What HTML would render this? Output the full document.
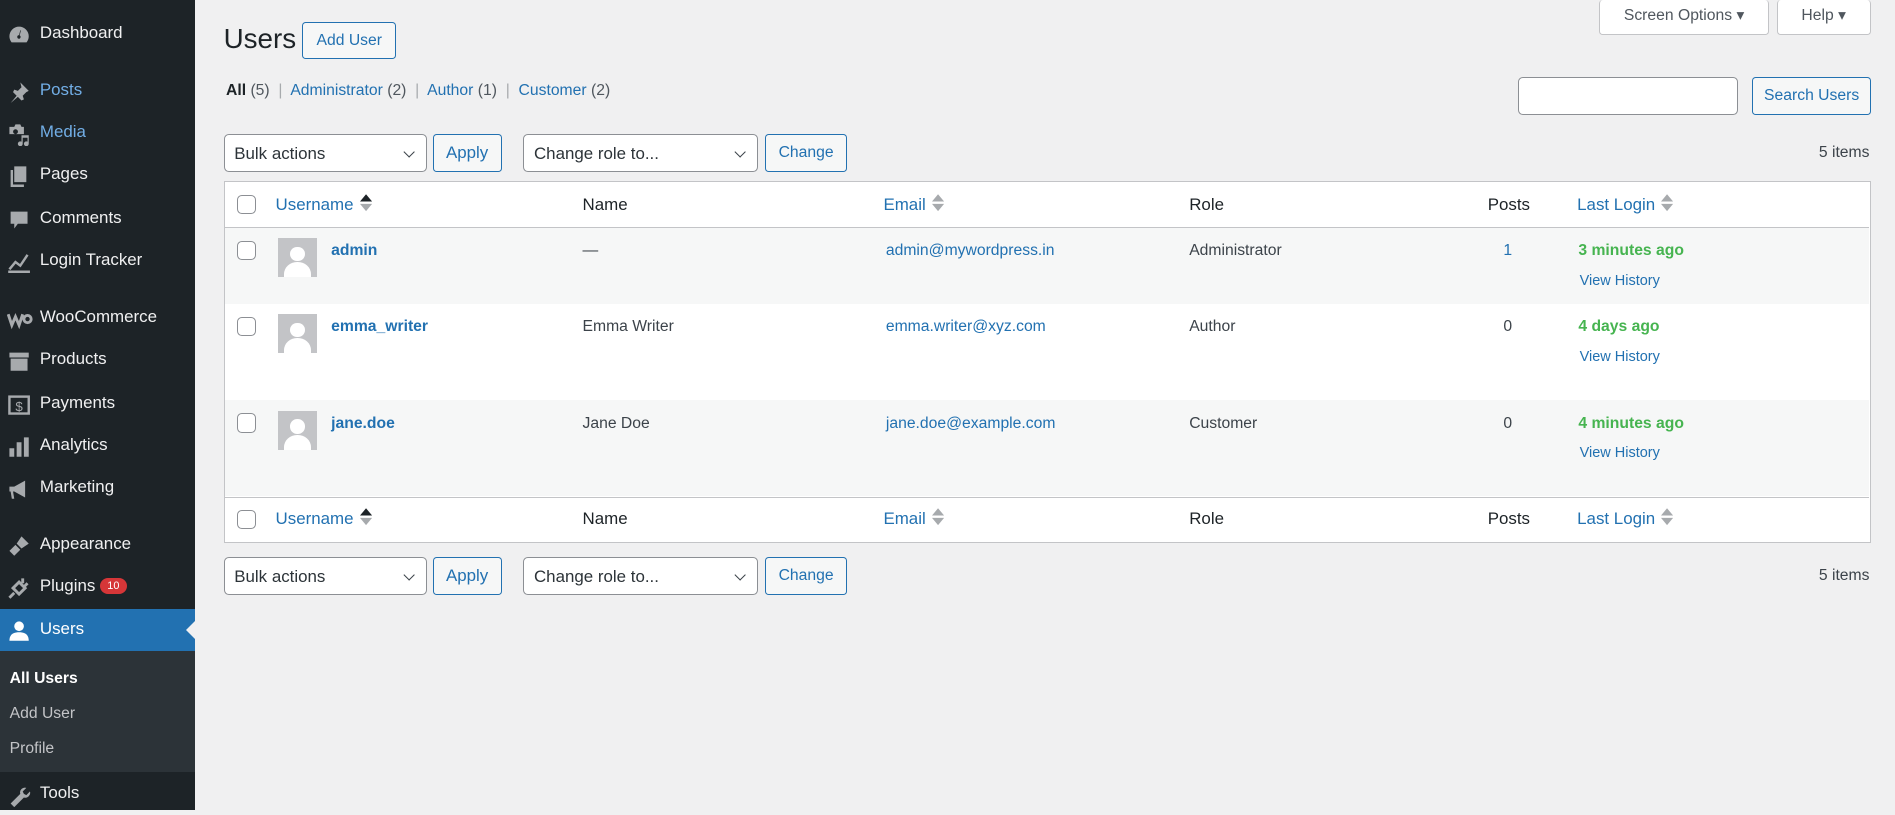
<!DOCTYPE html>
<html><head><meta charset="utf-8">
<style>
html,body{margin:0;padding:0;}
body{width:1895px;height:803px;overflow:hidden;background:#f0f0f1;font-family:"Liberation Sans",sans-serif;}
#w{zoom:1.20855;width:1568px;height:670px;position:relative;font-size:13px;color:#3c434a;}
#sb{position:absolute;left:0;top:0;width:161px;height:670px;background:#1d2327;}
.mi{position:absolute;left:0;width:161px;height:34px;color:#f0f0f1;font-size:14px;}
.mi span{position:absolute;left:33px;top:8px;}
.mi svg{position:absolute;left:6px;top:8px;}
.blue{color:#72aee6!important;}
.sub{position:absolute;left:0;top:539px;width:161px;height:100px;background:#2c3338;}
.sub div{position:absolute;left:8px;font-size:13px;color:#c3c4c7;}
.a{position:absolute;white-space:nowrap;}
.lnk{color:#2271b1;}
.btn{position:absolute;border:1px solid #2271b1;border-radius:3px;color:#2271b1;background:#f6f7f7;font-size:13px;text-align:center;box-sizing:border-box;}
.sel{position:absolute;border:1px solid #8c8f94;border-radius:4px;background:#fff;box-sizing:border-box;font-size:14px;color:#2c3338;padding:7px 8px;}
.sel:after{content:"";position:absolute;right:10px;top:11px;width:6px;height:6px;border-right:1.6px solid #3c434a;border-bottom:1.6px solid #3c434a;transform:rotate(45deg);}
.cb{position:absolute;width:16px;height:16px;border:1px solid #8c8f94;border-radius:4px;background:#fff;box-sizing:border-box;}
.av{position:absolute;width:32px;height:32px;background:#c3c4c7;overflow:hidden;}
.av:before{content:"";position:absolute;left:10px;top:7px;width:12px;height:12px;border-radius:50%;background:#fff;}
.av:after{content:"";position:absolute;left:5px;top:20px;width:22px;height:20px;border-radius:50% 50% 0 0;background:#fff;}
.th{font-size:14px;color:#1d2327;}
.sort{display:inline-block;vertical-align:middle;margin-left:5px;}
.g{color:#46b450;font-weight:bold;font-size:13px;}
</style></head><body><div id="w">
<div id="sb">
 <div class="mi" style="top:11px"><svg width="20" height="20" viewBox="0 0 20 20"><path d="M10 3a8 8 0 0 0-8 8c0 2 .7 3.6 1.8 5h12.4A8 8 0 0 0 18 11a8 8 0 0 0-8-8zm0 10a1.5 1.5 0 1 1 0-3l1-4 .5.2-1 4a1.5 1.5 0 0 1-.5 2.8z" fill="#a7aaad"/></svg><span style="top:8px">Dashboard</span></div>
 <div class="mi" style="top:58px"><svg width="20" height="20" viewBox="0 0 20 20"><path d="M11 2l7 7-2 1-3 3 1 3-2 1-3-3-6 5 5-6-3-3 1-2 3 1 3-3z" fill="#a7aaad"/></svg><span class="blue">Posts</span></div>
 <div class="mi" style="top:93px"><svg width="20" height="20" viewBox="0 0 20 20"><path d="M2 4h4l1-2h4l1 2h2v6H2zM7 6a2 2 0 1 0 .1 0zM12 11h6v7a2 2 0 1 1-1-1.7V13h-4v5a2 2 0 1 1-1-1.7z" fill="#a7aaad"/></svg><span class="blue">Media</span></div>
 <div class="mi" style="top:128px"><svg width="20" height="20" viewBox="0 0 20 20"><path d="M6 2h10v13H6zM3 5h2v12h9v2H3z" fill="#a7aaad"/></svg><span>Pages</span></div>
 <div class="mi" style="top:164px"><svg width="20" height="20" viewBox="0 0 20 20"><path d="M3 3h14v10H9l-3 4v-4H3z" fill="#a7aaad"/></svg><span>Comments</span></div>
 <div class="mi" style="top:199px"><svg width="20" height="20" viewBox="0 0 20 20"><path d="M1 18h18M2 16l5-6 4 3 6-9" stroke="#a7aaad" stroke-width="2" fill="none"/></svg><span>Login Tracker</span></div>
 <div class="mi" style="top:246px"><svg width="22" height="20" viewBox="0 0 22 20"><path d="M1 6l3 9 3-7 3 7 3-9M14 10a3 3 0 1 0 6 0a3 3 0 1 0-6 0" stroke="#a7aaad" stroke-width="2.4" fill="none"/></svg><span>WooCommerce</span></div>
 <div class="mi" style="top:281px"><svg width="20" height="20" viewBox="0 0 20 20"><path d="M2 3h16v4H2zM3 8h14v10H3zM7 10h6v2H7z" fill="#a7aaad"/></svg><span>Products</span></div>
 <div class="mi" style="top:317px"><svg width="20" height="20" viewBox="0 0 20 20"><rect x="2" y="3" width="16" height="14" fill="none" stroke="#a7aaad" stroke-width="2"/><text x="10" y="15" font-size="11" fill="#a7aaad" text-anchor="middle" font-family="Liberation Sans">$</text></svg><span>Payments</span></div>
 <div class="mi" style="top:352px"><svg width="20" height="20" viewBox="0 0 20 20"><path d="M2 11h4v7H2zM8 6h4v12H8zM14 2h4v16h-4z" fill="#a7aaad"/></svg><span>Analytics</span></div>
 <div class="mi" style="top:387px"><svg width="20" height="20" viewBox="0 0 20 20"><path d="M2 8h4l9-5v14l-9-5H5l1 6H4l-1-6H2z" fill="#a7aaad"/></svg><span>Marketing</span></div>
 <div class="mi" style="top:434px"><svg width="20" height="20" viewBox="0 0 20 20"><path d="M12 2l6 6-6 4-4-4zM7 9l4 4-5 5-4-4z" fill="#a7aaad"/></svg><span>Appearance</span></div>
 <div class="mi" style="top:469px"><svg width="20" height="20" viewBox="0 0 20 20"><path d="M13 2v4M17 6l-3 3M5 10l5-5 5 5-5 5zM6 14l-4 4" stroke="#a7aaad" stroke-width="2.4" fill="none"/></svg><span>Plugins <b style="display:inline-block;background:#d63638;color:#fff;border-radius:9px;font-size:9px;padding:2px 6px;vertical-align:top;margin-top:1px;font-weight:normal">10</b></span></div>
 <div class="mi" style="top:504px;height:35px;background:#2271b1"><svg width="20" height="20" viewBox="0 0 20 20"><circle cx="10" cy="6" r="4" fill="#fff"/><path d="M2 18c0-5 3-7 8-7s8 2 8 7z" fill="#fff"/></svg><span style="color:#fff">Users</span><div style="position:absolute;right:0;top:10px;border:8px solid transparent;border-right-color:#f0f0f1"></div></div>
 <div class="sub"><div style="top:15px;color:#fff;font-weight:bold">All Users</div><div style="top:44px">Add User</div><div style="top:73px">Profile</div></div>
 <div class="mi" style="top:640px"><svg width="20" height="20" viewBox="0 0 20 20"><path d="M3 17l8-8a4 4 0 0 1 5-5l-3 3 1 2 2 1 3-3a4 4 0 0 1-5 5l-8 8z" fill="#a7aaad"/></svg><span>Tools</span></div>
</div>

<div class="a" style="left:185px;top:19px;font-size:23px;color:#1d2327">Users</div>
<div class="btn" style="left:250px;top:18px;width:78px;height:31px;line-height:29px">Add User</div>
<div class="btn" style="left:1323px;top:0;width:141px;height:29px;line-height:26px;border-color:#c3c4c7;border-top:none;color:#50575e;background:#fff">Screen Options ▾</div>
<div class="btn" style="left:1470px;top:0;width:78px;height:29px;line-height:26px;border-color:#c3c4c7;border-top:none;color:#50575e;background:#fff">Help ▾</div>

<div class="a" style="left:187px;top:68px;font-size:13px"><b style="color:#1d2327">All</b> <span style="color:#50575e">(5)</span> <span style="color:#a7aaad">&nbsp;|&nbsp;</span> <span class="lnk">Administrator</span> <span style="color:#50575e">(2)</span> <span style="color:#a7aaad">&nbsp;|&nbsp;</span> <span class="lnk">Author</span> <span style="color:#50575e">(1)</span> <span style="color:#a7aaad">&nbsp;|&nbsp;</span> <span class="lnk">Customer</span> <span style="color:#50575e">(2)</span></div>
<div class="a" style="left:1256px;top:64px;width:182px;height:31px;border:1px solid #8c8f94;border-radius:4px;background:#fff;box-sizing:border-box"></div>
<div class="btn" style="left:1450px;top:64px;width:98px;height:31px;line-height:29px">Search Users</div>

<div class="sel" style="left:185px;top:111px;width:168px;height:31px;padding-top:7px">Bulk actions</div>
<div class="btn" style="left:358px;top:111px;width:57px;height:31px;line-height:29px;font-size:14px">Apply</div>
<div class="sel" style="left:433px;top:111px;width:194px;height:31px">Change role to...</div>
<div class="btn" style="left:633px;top:111px;width:68px;height:31px;line-height:29px">Change</div>
<div class="a" style="left:1505px;top:119px">5 items</div>

<div class="a" style="left:185px;top:150px;width:1363px;height:299px;border:1px solid #c3c4c7;box-sizing:border-box;background:#fff">
 <div class="a" style="left:0;top:37px;width:1361px;height:63px;background:#f6f7f7;border-top:1px solid #c3c4c7"></div>
 <div class="a" style="left:0;top:180px;width:1361px;height:80px;background:#f6f7f7"></div>
 <div class="a" style="left:0;top:260px;width:1361px;border-top:1px solid #c3c4c7"></div>
</div>
<div class="cb" style="left:196px;top:161px"></div>
<div class="a th lnk" style="left:228px;top:161px;color:#2271b1">Username<svg class="sort" width="10" height="16" viewBox="0 0 10 16" style="margin-top:-4px"><path d="M0 7L5 1 10 7z" fill="#1d2327"/><path d="M0 9L5 15 10 9z" fill="#a7aaad"/></svg></div>
<div class="a th" style="left:482px;top:161px">Name</div>
<div class="a th" style="left:731px;top:161px;color:#2271b1">Email<svg class="sort" width="10" height="16" viewBox="0 0 10 16" style="margin-top:-4px"><path d="M0 7L5 1 10 7zM0 9L5 15 10 9z" fill="#a7aaad"/></svg></div>
<div class="a th" style="left:984px;top:161px">Role</div>
<div class="a th" style="left:1231px;top:161px">Posts</div>
<div class="a th" style="left:1305px;top:161px;color:#2271b1">Last Login<svg class="sort" width="10" height="16" viewBox="0 0 10 16" style="margin-top:-4px"><path d="M0 7L5 1 10 7zM0 9L5 15 10 9z" fill="#a7aaad"/></svg></div>

<div class="cb" style="left:196px;top:199px"></div><div class="av" style="left:230px;top:197px"></div>
<div class="a lnk" style="left:274px;top:200px;font-weight:bold">admin</div>
<div class="a" style="left:482px;top:200px">—</div>
<div class="a lnk" style="left:733px;top:200px">admin@mywordpress.in</div>
<div class="a" style="left:984px;top:200px">Administrator</div>
<div class="a lnk" style="left:1244px;top:200px">1</div>
<div class="a g" style="left:1306px;top:200px">3 minutes ago</div>
<div class="a lnk" style="left:1307px;top:226px;font-size:12px">View History</div>

<div class="cb" style="left:196px;top:262px"></div><div class="av" style="left:230px;top:260px"></div>
<div class="a lnk" style="left:274px;top:263px;font-weight:bold">emma_writer</div>
<div class="a" style="left:482px;top:263px">Emma Writer</div>
<div class="a lnk" style="left:733px;top:263px">emma.writer@xyz.com</div>
<div class="a" style="left:984px;top:263px">Author</div>
<div class="a" style="left:1244px;top:263px">0</div>
<div class="a g" style="left:1306px;top:263px">4 days ago</div>
<div class="a lnk" style="left:1307px;top:289px;font-size:12px">View History</div>

<div class="cb" style="left:196px;top:342px"></div><div class="av" style="left:230px;top:340px"></div>
<div class="a lnk" style="left:274px;top:343px;font-weight:bold">jane.doe</div>
<div class="a" style="left:482px;top:343px">Jane Doe</div>
<div class="a lnk" style="left:733px;top:343px">jane.doe@example.com</div>
<div class="a" style="left:984px;top:343px">Customer</div>
<div class="a" style="left:1244px;top:343px">0</div>
<div class="a g" style="left:1306px;top:343px">4 minutes ago</div>
<div class="a lnk" style="left:1307px;top:368px;font-size:12px">View History</div>

<div class="cb" style="left:196px;top:422px"></div>
<div class="a th" style="left:228px;top:421px;color:#2271b1">Username<svg class="sort" width="10" height="16" viewBox="0 0 10 16" style="margin-top:-4px"><path d="M0 7L5 1 10 7z" fill="#1d2327"/><path d="M0 9L5 15 10 9z" fill="#a7aaad"/></svg></div>
<div class="a th" style="left:482px;top:421px">Name</div>
<div class="a th" style="left:731px;top:421px;color:#2271b1">Email<svg class="sort" width="10" height="16" viewBox="0 0 10 16" style="margin-top:-4px"><path d="M0 7L5 1 10 7zM0 9L5 15 10 9z" fill="#a7aaad"/></svg></div>
<div class="a th" style="left:984px;top:421px">Role</div>
<div class="a th" style="left:1231px;top:421px">Posts</div>
<div class="a th" style="left:1305px;top:421px;color:#2271b1">Last Login<svg class="sort" width="10" height="16" viewBox="0 0 10 16" style="margin-top:-4px"><path d="M0 7L5 1 10 7zM0 9L5 15 10 9z" fill="#a7aaad"/></svg></div>

<div class="sel" style="left:185px;top:461px;width:168px;height:31px">Bulk actions</div>
<div class="btn" style="left:358px;top:461px;width:57px;height:31px;line-height:29px;font-size:14px">Apply</div>
<div class="sel" style="left:433px;top:461px;width:194px;height:31px">Change role to...</div>
<div class="btn" style="left:633px;top:461px;width:68px;height:31px;line-height:29px">Change</div>
<div class="a" style="left:1505px;top:469px">5 items</div>
</div></body></html>
